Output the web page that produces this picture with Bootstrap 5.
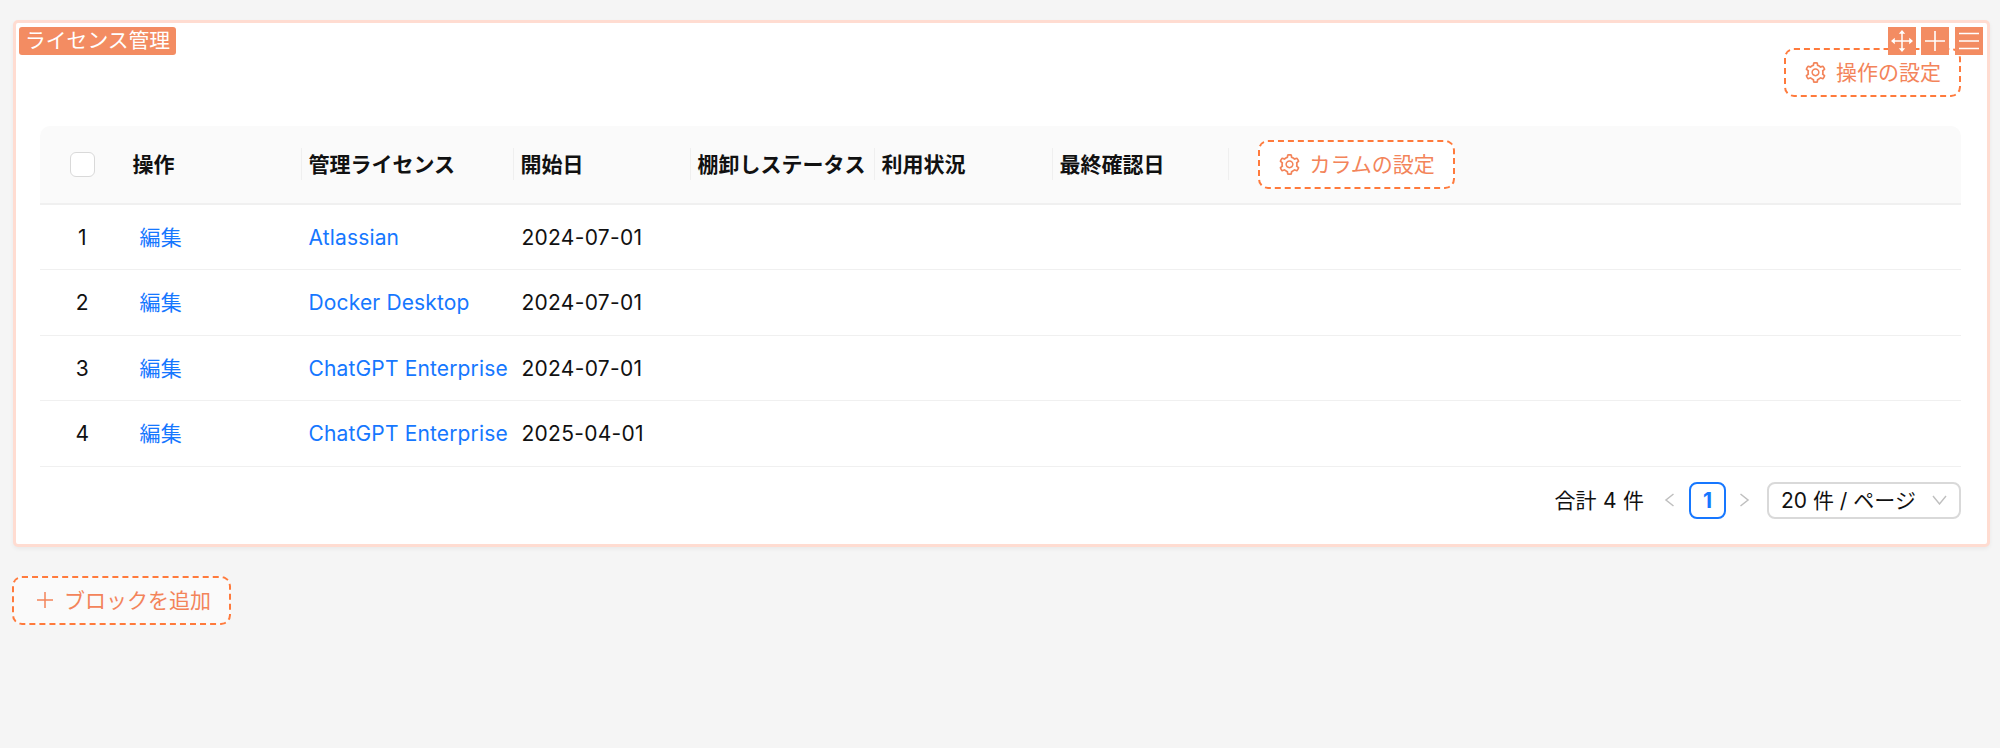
<!DOCTYPE html>
<html lang="ja">
<head>
<meta charset="utf-8">
<title>ライセンス管理</title>
<link href="https://cdn.jsdelivr.net/npm/bootstrap@5.3.0/dist/css/bootstrap.min.css" rel="stylesheet">
<style>
html,body{height:100%}
body{background:#f5f5f5;font-family:Inter,"Noto Sans CJK JP",sans-serif;font-size:21px;color:#111;padding:20px 10px 0 13px}
.lic-panel{position:relative;background:#fff;border:3.5px solid #ffdcd1;border-radius:5px;padding:25px 26px 25px 24px;box-shadow:0 2px 4px rgba(0,0,0,.05)}
.lic-tag{position:absolute;left:3px;top:3.5px;height:28px;line-height:27px;padding:0 6px;background:#f38c62;color:#fff;border-radius:3px;font-size:20.8px}
.lic-tools{position:absolute;right:4.5px;top:4px;gap:5.5px}
.lic-tool{width:28px;height:28px;background:#f38c62;display:flex;align-items:center;justify-content:center}
.lic-dash{display:inline-flex;align-items:center;gap:10px;height:49px;padding:0 18px 0 19px;background:#fff;border:2px dashed #ff7a3c;border-radius:10px;color:#f3845a;font-size:21px;line-height:1;white-space:nowrap}
.lic-dash svg{fill:currentColor;flex:none}
.lic-table{table-layout:fixed;width:100%;margin:29px 0 0;border-collapse:separate;border-spacing:0}
.lic-table>thead>tr>th{position:relative;background:#fafafa;height:78.5px;padding:0 8px;font-weight:600;font-size:21px;color:#111;border-bottom:2px solid #f0f0f0;white-space:nowrap;vertical-align:middle;box-shadow:none}
.lic-table>thead>tr>th:first-child{border-top-left-radius:10px;text-align:center}
.lic-table>thead>tr>th:last-child{border-top-right-radius:10px}
.lic-table>thead>tr>th.lic-sep::before{content:"";position:absolute;left:0;top:50%;height:32px;margin-top:-16px;width:1.5px;background:#efefef}
.lic-table>tbody>tr>td{height:65.6px;padding:1px 8px 0;border-bottom:1.5px solid #f0f0f0;vertical-align:middle;color:#111;white-space:nowrap;box-shadow:none;background:#fff;letter-spacing:.15px}
.lic-table>tbody>tr>td.lic-date{letter-spacing:.28px;padding-left:9px}
.lic-table>tbody>tr>td:first-child{text-align:center}
.lic-table a{color:#1677ff;text-decoration:none}
.lic-edit{margin-left:7px}
.lic-check{display:block;margin:0 auto;width:25px;height:25px;border:1.5px solid #d9d9d9;border-radius:6px;background:#fff}
.lic-col-btn{margin-left:22px}
.lic-pager{margin-top:15px;font-size:21px;line-height:1}
.lic-pager svg{flex:none}
.lic-pgrow{height:37px}
.lic-cur{width:37px;height:37px;display:flex;align-items:center;justify-content:center;border:2px solid #1677ff;border-radius:8px;color:#1677ff;font-weight:700;margin:0 13px 0 14px}
.lic-sel{width:194px;height:37px;border:2px solid #d9d9d9;border-radius:8px;padding:0 12px;margin-left:17px;background:#fff}
.lic-total{margin-right:20px;word-spacing:.5px}
.lic-add{margin:29px 0 0 -1px;padding:0 18px 0 22px;background:#fafafa}
</style>
</head>
<body>
<svg width="0" height="0" class="d-block" aria-hidden="true"><symbol id="lic-gear" viewBox="64 64 896 896"><path d="M924.8 625.7l-65.5-56c3.1-19 4.7-38.4 4.7-57.8s-1.6-38.8-4.7-57.8l65.5-56a32.03 32.03 0 0 0 9.3-35.2l-.9-2.6a443.74 443.74 0 0 0-79.7-137.9l-1.8-2.1a32.12 32.12 0 0 0-35.1-9.5l-81.3 28.9c-30-24.6-63.5-44-99.7-57.6l-15.7-85a32.05 32.05 0 0 0-25.8-25.7l-2.7-.5c-52.1-9.4-106.9-9.4-159 0l-2.7.5a32.05 32.05 0 0 0-25.8 25.7l-15.8 85.4a351.86 351.86 0 0 0-99 57.4l-81.9-29.1a32 32 0 0 0-35.1 9.5l-1.8 2.1a446.02 446.02 0 0 0-79.7 137.9l-.9 2.6c-4.5 12.5-.8 26.5 9.3 35.2l66.3 56.6c-3.1 18.8-4.6 38-4.6 57.1 0 19.2 1.5 38.4 4.6 57.1L99 625.5a32.03 32.03 0 0 0-9.3 35.2l.9 2.6c18.1 50.4 44.9 96.9 79.7 137.9l1.8 2.1a32.12 32.12 0 0 0 35.1 9.5l81.9-29.1c29.8 24.5 63.1 43.9 99 57.4l15.8 85.4a32.05 32.05 0 0 0 25.8 25.7l2.7.5a449.4 449.4 0 0 0 159 0l2.7-.5a32.05 32.05 0 0 0 25.8-25.7l15.7-85a350 350 0 0 0 99.7-57.6l81.3 28.9a32 32 0 0 0 35.1-9.5l1.8-2.1c34.8-41.1 61.6-87.5 79.7-137.9l.9-2.6c4.5-12.3.8-26.3-9.3-35zM788.3 465.9c2.5 15.1 3.8 30.6 3.8 46.1s-1.3 31-3.8 46.1l-6.6 40.1 74.7 63.9a370.03 370.03 0 0 1-42.6 73.6L721 702.8l-31.4 25.8c-23.9 19.6-50.5 35-79.3 45.8l-38.1 14.3-17.9 97a377.5 377.5 0 0 1-85 0l-17.9-97.2-37.8-14.5c-28.5-10.8-55-26.2-78.7-45.7l-31.4-25.9-93.4 33.2c-17-22.9-31.2-47.6-42.6-73.6l75.5-64.5-6.5-40c-2.4-14.9-3.7-30.3-3.7-45.5 0-15.3 1.2-30.6 3.7-45.5l6.5-40-75.5-64.5c11.3-26.1 25.6-50.7 42.6-73.6l93.4 33.2 31.4-25.9c23.7-19.5 50.2-34.9 78.7-45.7l37.9-14.3 17.9-97.2c28.1-3.2 56.8-3.2 85 0l17.9 97 38.1 14.3c28.7 10.8 55.4 26.2 79.3 45.8l31.4 25.8 92.8-32.9c17 22.9 31.2 47.6 42.6 73.6L781.8 426l6.5 39.9zM512 326c-97.2 0-176 78.8-176 176s78.8 176 176 176 176-78.8 176-176-78.8-176-176-176zm79.2 255.2A111.6 111.6 0 0 1 512 614c-29.9 0-58-11.7-79.2-32.8A111.6 111.6 0 0 1 400 502c0-29.9 11.7-58 32.8-79.2C454 401.6 482.1 390 512 390c29.9 0 58 11.6 79.2 32.8A111.6 111.6 0 0 1 624 502c0 29.9-11.7 58-32.8 79.2z"/></symbol></svg>

<div class="lic-panel">
  <span class="lic-tag">ライセンス管理</span>
  <div class="lic-tools d-flex">
    <span class="lic-tool"><svg width="24" height="24" viewBox="0 0 24 24" fill="none" stroke="#fff" stroke-width="1.5"><path d="M12 3v18M3 12h18"/><path d="M12 1l3.2 3.8H8.8zM12 23l3.2-3.8H8.8zM1 12l3.8-3.2v6.4zM23 12l-3.8-3.2v6.4z" fill="#fff" stroke="none"/></svg></span>
    <span class="lic-tool"><svg width="20" height="20" viewBox="0 0 20 20" stroke="#fff" stroke-width="1.6"><path d="M10 0v20M0 10h20"/></svg></span>
    <span class="lic-tool"><svg width="20" height="20" viewBox="0 0 20 20" stroke="#fff" stroke-width="1.6"><path d="M0 2.5h20M0 10h20M0 17.5h20"/></svg></span>
  </div>

  <div class="d-flex justify-content-end">
    <span class="lic-dash"><svg width="21" height="21"><use href="#lic-gear"/></svg>操作の設定</span>
  </div>

  <table class="table lic-table">
    <colgroup><col style="width:84.5px"><col style="width:176px"><col style="width:212px"><col style="width:177px"><col style="width:184px"><col style="width:178px"><col style="width:176px"><col></colgroup>
    <thead>
      <tr>
        <th><span class="lic-check"></span></th>
        <th>操作</th>
        <th class="lic-sep">管理ライセンス</th>
        <th class="lic-sep">開始日</th>
        <th class="lic-sep">棚卸しステータス</th>
        <th class="lic-sep">利用状況</th>
        <th class="lic-sep">最終確認日</th>
        <th class="lic-sep"><span class="lic-dash lic-col-btn fw-normal"><svg width="21" height="21"><use href="#lic-gear"/></svg>カラムの設定</span></th>
      </tr>
    </thead>
    <tbody>
      <tr><td>1</td><td><a class="lic-edit" href="#">編集</a></td><td><a href="#">Atlassian</a></td><td class="lic-date">2024-07-01</td><td></td><td></td><td></td><td></td></tr>
      <tr><td>2</td><td><a class="lic-edit" href="#">編集</a></td><td><a href="#">Docker Desktop</a></td><td class="lic-date">2024-07-01</td><td></td><td></td><td></td><td></td></tr>
      <tr><td>3</td><td><a class="lic-edit" href="#">編集</a></td><td><a href="#">ChatGPT Enterprise</a></td><td class="lic-date">2024-07-01</td><td></td><td></td><td></td><td></td></tr>
      <tr><td>4</td><td><a class="lic-edit" href="#">編集</a></td><td><a href="#">ChatGPT Enterprise</a></td><td class="lic-date">2025-04-01</td><td></td><td></td><td></td><td></td></tr>
    </tbody>
  </table>

  <div class="lic-pager d-flex justify-content-end align-items-start">
    <div class="d-flex align-items-center lic-pgrow">
      <span class="lic-total">合計 4 件</span>
      <svg width="11" height="14" viewBox="0 0 11 14" fill="none" stroke="#bfbfbf" stroke-width="1.5"><path d="M9.5 1L2 7l7.5 6"/></svg>
      <span class="lic-cur">1</span>
      <svg width="11" height="14" viewBox="0 0 11 14" fill="none" stroke="#bfbfbf" stroke-width="1.5"><path d="M1.5 1L9 7l-7.5 6"/></svg>
      <span class="lic-sel d-flex align-items-center justify-content-between"><span>20 件 / ページ</span><svg width="15" height="10" viewBox="0 0 15 10" fill="none" stroke="#bfbfbf" stroke-width="1.4"><path d="M1 1l6.5 8L14 1"/></svg></span>
    </div>
  </div>
</div>

<span class="lic-dash lic-add"><svg width="18" height="18" viewBox="0 0 18 18" stroke="#f3845a" stroke-width="1.5"><path d="M9 1v16M1 9h16"/></svg>ブロックを追加</span>
</body>
</html>
